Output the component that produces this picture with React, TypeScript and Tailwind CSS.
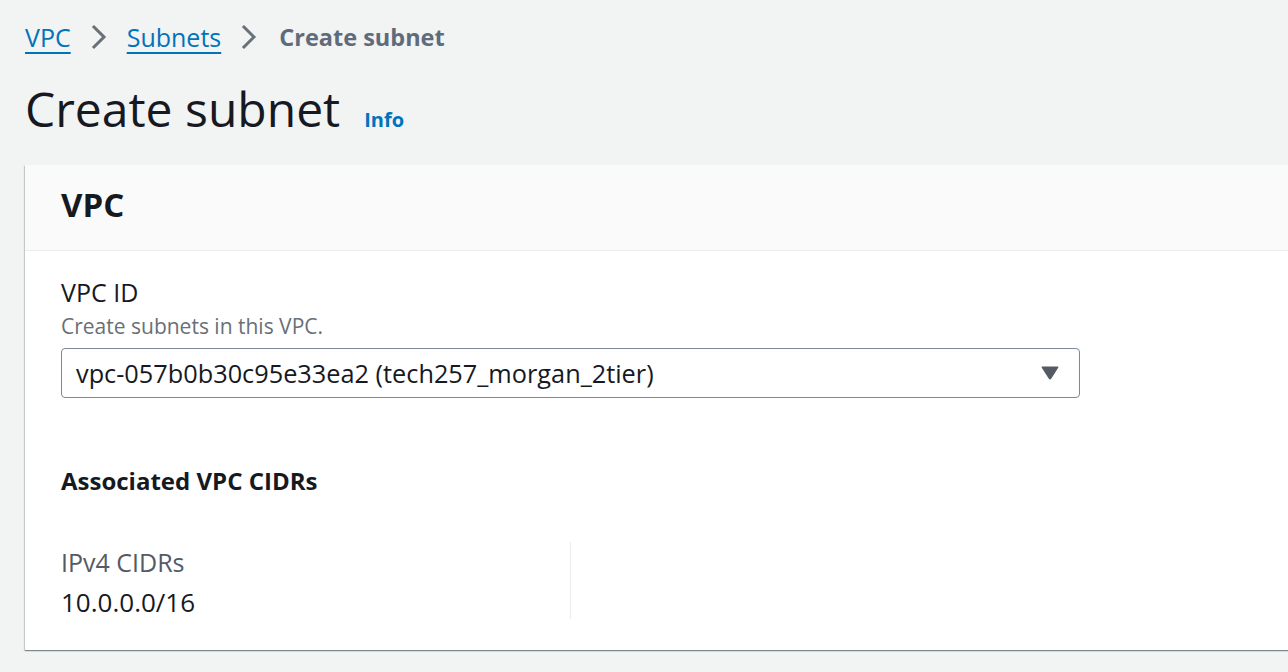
import React from "react";

const font = { fontFamily: '"Open Sans", "Noto Sans", sans-serif' };

function Chevron() {
  return (
    <svg width="16" height="26" viewBox="0 0 16 26" className="mx-[20px] shrink-0">
      <path d="M3 3 L13 13 L3 23" fill="none" stroke="#687078" strokeWidth="3" strokeLinecap="square" />
    </svg>
  );
}

function Caret() {
  return (
    <svg width="20" height="16" viewBox="0 0 20 16" className="shrink-0">
      <path
        d="M2.5 1.5 H17.5 Q19 1.5 18.2 2.8 L11.2 13.8 Q10 15.3 8.8 13.8 L1.8 2.8 Q1 1.5 2.5 1.5 Z"
        fill="#545b64"
      />
    </svg>
  );
}

export default function App() {
  return (
    <div className="min-h-screen w-full overflow-hidden bg-[#f2f3f3] text-[#16191f]" style={font}>
      <div className="pl-[25px] pt-[20px]">
        {/* Breadcrumbs */}
        <nav className="flex items-center text-[25px] leading-[34px]">
          <a className="text-[#0073bb] underline decoration-2 underline-offset-[5px]">VPC</a>
          <Chevron />
          <a className="text-[#0073bb] underline decoration-2 underline-offset-[5px]">Subnets</a>
          <Chevron />
          <span className="font-bold text-[23.5px] text-[#5f6b7a] ml-[2px]">Create subnet</span>
        </nav>

        {/* Page header */}
        <div className="mt-[27px] flex items-baseline">
          <h1 className="text-[48px] leading-[56px] font-normal">Create subnet</h1>
          <a className="ml-[24px] text-[20px] font-bold text-[#0073bb]">Info</a>
        </div>

        {/* Card */}
        <div className="mt-[28px] w-[1300px] bg-white shadow-[0_1px_1px_0_rgba(0,28,36,0.3),1px_1px_1px_0_rgba(0,28,36,0.15),-1px_1px_1px_0_rgba(0,28,36,0.15)]">
          <div className="bg-[#fafafa] border-b border-[#eaeded] pl-[36px] pt-[20px] pb-[25px]">
            <h2 className="text-[33px] leading-[40px] font-bold">VPC</h2>
          </div>

          <div className="pl-[36px] pt-[24px] pb-[31px]">
            <div className="text-[25px] leading-[34px]">VPC ID</div>
            <div className="mt-[2px] text-[21px] leading-[30px] text-[#687078]">Create subnets in this VPC.</div>
            <div className="mt-[7px] w-[1019px] h-[50px] flex items-center justify-between rounded-[4px] border border-[#7d8998] pl-[14px] pr-[19px]">
              <span className="text-[25.3px] leading-[48px]">vpc-057b0b30c95e33ea2 (tech257_morgan_2tier)</span>
              <Caret />
            </div>

            <h3 className="mt-[66px] text-[24px] leading-[34px] font-bold">Associated VPC CIDRs</h3>

            <div className="mt-[44px] grid grid-cols-[509px_509px]">
              <div className="pt-[4px]">
                <div className="text-[25px] leading-[32px] text-[#545b64]">IPv4 CIDRs</div>
                <div className="mt-[7px] text-[26px] leading-[34px]">10.0.0.0/16</div>
              </div>
              <div className="border-l border-[#eaeded]" />
            </div>
          </div>
        </div>
      </div>
    </div>
  );
}
